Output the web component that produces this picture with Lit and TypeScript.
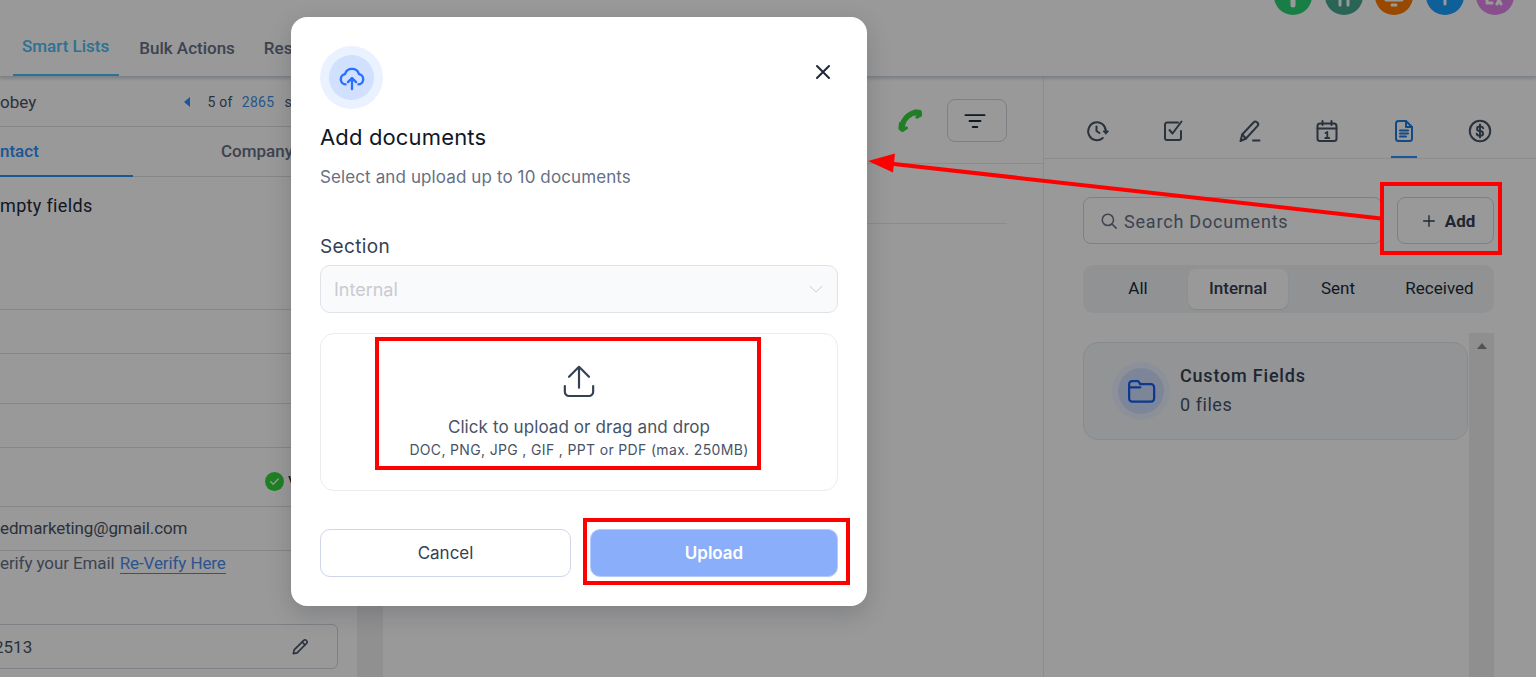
import { LitElement, html, css, svg } from "lit";
import { customElement } from "lit/decorators.js";

const I = (w: number, body: unknown, cls = "", sw = 2) => html`<svg class=${cls} width=${w} height=${w} viewBox="0 0 24 24" fill="none" stroke="currentColor" stroke-width=${sw} stroke-linecap="round" stroke-linejoin="round">${body}</svg>`;

@customElement("app-root")
export class AppRoot extends LitElement {
  static styles = css`
    :host { display: block; width: 1536px; height: 677px; position: relative; overflow: hidden; font-family: Roboto, "Liberation Sans", sans-serif; background: #fff; color: #344054; }
    * { box-sizing: border-box; }
    .page { display: flex; flex-direction: column; height: 677px; }
    .head { height: 77px; flex: none; display: flex; flex-direction: column; border-bottom: 1px solid #d0d5dd; box-shadow: 0 2px 3px rgba(16,24,40,.16); position: relative; z-index: 1; }
    .avatars { height: 27px; margin-top: -23px; display: flex; justify-content: flex-end; gap: 12.4px; padding-right: 22px; flex: none; }
    .av { width: 38px; height: 38px; border-radius: 50%; flex: none; position: relative; color: #fff; display: flex; align-items: flex-end; justify-content: center; }
    .av svg { margin-bottom: -9px; }
    .tabs { display: flex; padding-left: 13px; height: 73px; align-items: stretch; font-size: 17px; font-weight: 500; }
    .tab { display: flex; align-items: center; padding: 15px 9px 0; color: #667085; margin-right: 11px; }
    .tab.on { color: #4dbcf5; border-bottom: 2px solid #4dbcf5; padding: 13px 10px 0 9px; }
    .tab.res { margin-left: 0; }
    .main { flex: 1; display: flex; min-height: 0; }
    .left { width: 357px; flex: none; display: flex; flex-direction: column; font-size: 17px; }
    .row { border-bottom: 1.5px solid #dcdfe5; display: flex; align-items: center; flex: none; }
    .r1 { height: 50px; justify-content: space-between; color: #475467; }
    .pager { display: flex; align-items: center; font-size: 14px; margin-right: 65px; letter-spacing: .3px; }
    .tri { width: 0; height: 0; border: 5px solid transparent; border-right: 6px solid #2e90fa; border-left: 0; margin-right: 17px; }
    .pager b { font-weight: 400; color: #3f8fe6; margin-left: 9px; margin-right: 10px; }
    .r2 { height: 50px; font-size: 17px; font-weight: 500; color: #667085; }
    .ct { width: 133px; height: 100%; display: flex; align-items: center; border-bottom: 2px solid #2e90fa; color: #2e90fa; margin-bottom: -1px; }
    .co { margin-left: 88px; padding-bottom: 2px; }
    .r3 { height: 133px; align-items: flex-start; padding-top: 18px; font-size: 18px; letter-spacing: .35px; color: #1d2939; }
    .r4 { height: 44px; } .r5 { height: 50px; }
    .r7 { height: 59px; justify-content: flex-end; padding-top: 9px; }
    .r7 i { font-style: normal; color: #1d2939; margin-left: 4px; margin-right: 58px; width: 11px; }
    .ok { width: 19px; height: 19px; border-radius: 50%; background: #32d83c; color: #fff; display: flex; align-items: center; justify-content: center; flex: none; }
    .r8 { height: 44px; font-size: 17px; letter-spacing: -.12px; color: #475467; padding-bottom: 2px; }
    .verify { font-size: 17px; letter-spacing: -.1px; color: #667085; margin: 2px 0 0; line-height: 20px; }
    .verify a { color: #4a8cf0; border-bottom: 1px solid #4a8cf0; margin-left: 1px; }
    .inp { width: 348px; height: 45px; margin: 51px 0 0 -10px; border: 1.5px solid #d0d5dd; border-radius: 6px; display: flex; align-items: center; justify-content: space-between; padding: 0 27px 0 3px; font-size: 17px; color: #475467; flex: none; }
    .strip { width: 26px; flex: none; background: #f1f1f1; }
    .center { width: 661px; flex: none; border-right: 1px solid #e9eaee; display: flex; flex-direction: column; }
    .ctop { height: 87px; flex: none; border-bottom: 1.5px solid #e9eaee; display: flex; align-items: flex-start; justify-content: flex-end; padding: 22px 36px 0 0; }
    .phone { color: #38d040; margin: 9px 25px 0 0; }
    .fbtn { width: 60px; height: 43px; border: 1.5px solid #d0d5dd; border-radius: 8px; display: flex; align-items: center; justify-content: center; color: #1d2939; padding-right: 4px; }
    .cline { height: 60px; margin-right: 36px; border-bottom: 1.5px solid #e9eaee; flex: none; }
    .right { flex: 1; display: flex; flex-direction: column; min-width: 0; }
    .rtabs { height: 82px; flex: none; border-bottom: 1.5px solid #e9eaee; display: flex; padding: 41px 0 0 39.5px; color: #475467; }
    .rt { width: 26px; margin-right: 50.8px; height: 40px; display: flex; justify-content: center; flex: none; padding-top: 1px; }
    .rt.on { color: #1f7ae0; border-bottom: 2px solid #2e90fa; }
    .tools { display: flex; padding: 38px 42px 0 39px; gap: 15px; flex: none; }
    .search { width: 299px; height: 47px; border: 1.5px solid #d0d5dd; border-radius: 8px; display: flex; align-items: center; gap: 6px; padding: 1px 0 0 16px; font-size: 18px; letter-spacing: .8px; color: #667085; }
    .add { width: 97px; height: 47px; border: 1.5px solid #d0d5dd; border-radius: 8px; display: flex; align-items: center; justify-content: center; gap: 8px; font-size: 17px; font-weight: 700; color: #344054; padding-left: 5px; }
    .seg { margin: 21px 42px 0 39px; height: 48px; width: 411px; border-radius: 10px; background: #f2f4f7; display: grid; grid-template-columns: 105px 100px 100px 106px; align-items: center; justify-items: center; font-size: 17px; color: #1d2939; flex: none; }
    .seg .s { width: 100%; height: 40px; display: flex; align-items: center; justify-content: center; padding-bottom: 2px; }
    .seg .s:first-child { padding-left: 5px; }
    .seg .s:last-child { padding-right: 3px; }
    .seg .a { background: #fff; border-radius: 8px; font-weight: 500; color: #344054; box-shadow: 0 1px 2px rgba(16,24,40,.1); }
    .lower { display: flex; margin: 20px 42px 0 39px; flex: 1; min-height: 0; }
    .cards { flex: 1; padding-top: 9px; }
    .card { width: 385px; height: 98px; border: 1.5px solid #e4e7ec; border-radius: 15px; background: #f5f7fb; display: flex; align-items: center; padding: 0 0 0 34px; gap: 16px; }
    .fo { width: 46px; height: 46px; border-radius: 50%; background: #d1e0ff; box-shadow: 0 0 0 6px #eaf1ff; display: flex; align-items: center; justify-content: center; color: #155eef; flex: none; }
    .cn { font-size: 18px; font-weight: 500; color: #344054; letter-spacing: .8px; line-height: 29px; margin-top: -2px; }
    .cf { font-size: 18px; color: #475467; letter-spacing: .55px; line-height: 29px; }
    .sb { width: 25px; background: #efefef; display: flex; justify-content: center; padding-top: 10px; flex: none; }
    .up { width: 0; height: 0; border: 5.5px solid transparent; border-bottom: 6px solid #8a8a8a; border-top: 0; }

    .veil { position: absolute; inset: 0; background: rgba(0,0,0,.4); padding: 17px 0 0 291px; z-index: 2; }
    .modal { position: relative; width: 576px; height: 589px; background: #fff; border-radius: 16px; padding: 29px 29px 0; font-family: Inter, Roboto, sans-serif; box-shadow: 0 8px 24px rgba(16,24,40,.18); display: flex; flex-direction: column; }
    .close { position: absolute; top: 43px; right: 32px; color: #1d2939; display: flex; }
    .mi { width: 63px; height: 63px; border-radius: 50%; background: #eaf1ff; display: flex; align-items: center; justify-content: center; flex: none; }
    .mi div { width: 45px; height: 45px; border-radius: 50%; background: #d1e0ff; display: flex; align-items: center; justify-content: center; color: #2970ff; }
    h2 { margin: 13px 0 0; font-size: 22px; font-weight: 400; line-height: 30px; letter-spacing: .15px; color: #101828; }
    .sub { margin: 13px 0 0; font-size: 17px; line-height: 24px; letter-spacing: .11px; color: #667085; }
    .lab { margin-top: 44px; font-size: 19px; letter-spacing: .35px; line-height: 28px; color: #344054; }
    .sel { margin-top: 4px; height: 48px; border: 1px solid #e0e2e8; border-radius: 10px; background: #f9fafb; display: flex; align-items: center; justify-content: space-between; padding: 0 12px 0 13px; font-size: 18px; color: #c9cbd0; flex: none; }
    .drop { position: relative; margin-top: 20px; height: 158px; border: 1px solid #eaecf0; border-radius: 14px; display: flex; flex-direction: column; align-items: center; padding-top: 27px; flex: none; }
    .drop svg { color: #344054; }
    .d1 { margin-top: 14px; font-size: 17px; line-height: 24px; letter-spacing: .09px; color: #475467; }
    .d2 { font-size: 14px; line-height: 22px; letter-spacing: .34px; color: #475467; }
    .btns { margin-top: 38px; display: flex; justify-content: space-between; }
    .btn { height: 48px; border-radius: 10px; display: flex; align-items: center; justify-content: center; font-size: 17px; flex: none; }
    .cancel { width: 251px; border: 1px solid #d0d5e8; color: #344054; font-weight: 400; }
    .upload { width: 248px; background: #8aaefa; border: 1px solid #b2ccff; color: #fff; font-weight: 600; position: relative; }

    .mark { position: absolute; border: 4px solid #ff0000; pointer-events: none; }
    .m1 { left: 54px; top: 3px; width: 386px; height: 133px; }
    .m2 { left: -8px; top: -12px; width: 267px; height: 67px; }
    .m3 { left: 1380px; top: 182px; width: 122px; height: 73px; z-index: 3; }
    .arrow { position: absolute; left: 0; top: 0; z-index: 3; pointer-events: none; }
  `;

  render() {
    const avs: [string, unknown][] = [
      ["#2bd075", svg`<path d="M12 0v5" stroke-width="5"/>`],
      ["#46a78e", svg`<path d="M8 0v5M16 0v5" stroke-width="3"/>`],
      ["#ff7800", svg`<path d="M4 0h16M10 5h4" stroke-width="3"/>`],
      ["#199eff", svg`<path d="M12 0v4" stroke-width="3"/>`],
      ["#e185e9", svg`<path d="M4 0v3h5M14 4l2-4 2 4" stroke-width="3"/>`],
    ];
    const tabsIcons = [
      svg`<path d="M20.800 12a8.800 9 0 1 0-3 7"/><path d="M11.500 7.500v4.500l3 2"/><path d="M18.500 12h5l-2.500 3z" fill="currentColor" stroke-width="1"/>`,
      svg`<path d="M20 12v7a2 2 0 0 1-2 2H6a2 2 0 0 1-2-2V5.500a2 2 0 0 1 2-2h11"/><path d="M8.500 11l3 3.500L20.500 2.500"/>`,
      svg`<path d="M2.500 22l1.700-6.500L15.500 3.500a2.500 2.500 0 0 1 3.500-.3 2.700 2.700 0 0 1 .6 3.700L8 19.500z"/><path d="M4.200 15.500l3.800 4"/><path d="M15 21.500h6.500"/>`,
      svg`<rect x="2.500" y="4.500" width="19" height="17.500" rx="2.500"/><path d="M2.500 9.500h19M7.500 2v4M16.500 2v4"/><path d="M10.500 14l1.800-1v6M10.200 19h4" stroke-width="1.800"/>`,
      svg`<path d="M4 4.500A2.500 2.500 0 0 1 6.500 2H14l6 6v11.500a2.500 2.500 0 0 1-2.500 2.500h-11A2.500 2.500 0 0 1 4 19.500z"/><path d="M14 2v6h6M8 11.500h8M8 14.500h8M8 17.500h6"/>`,
      svg`<circle cx="12" cy="12" r="10.200"/><path d="M15.200 9.300A2.700 2.300 0 0 0 12.700 7.500h-1.300a2.300 2.300 0 0 0 0 4.600h1.300a2.300 2.300 0 0 1 0 4.600h-1.300a2.800 2.300 0 0 1-2.700-1.900M12 5.500v13"/>`,
    ];
    return html`
      <div class="page">
        <div class="head">
          <div class="avatars">${avs.map(([c, b]) => html`<div class="av" style="background:${c}">${I(24, b)}</div>`)}</div>
          <div class="tabs">
            <div class="tab on">Smart Lists</div>
            <div class="tab">Bulk Actions</div>
            <div class="tab res">Res</div>
          </div>
        </div>
        <div class="main">
          <div class="left">
            <div class="row r1"><span>obey</span><span class="pager"><span class="tri"></span>5 of <b>2865</b> s</span></div>
            <div class="row r2"><span class="ct">ntact</span><span class="co">Company</span></div>
            <div class="row r3"><span>mpty fields</span></div>
            <div class="row r4"></div>
            <div class="row r5"></div>
            <div class="row r4"></div>
            <div class="row r7"><span class="ok">${I(13, svg`<path d="M5 12.500l4.500 4.500L19 7.500"/>`, "", 2.5)}</span><i>V</i></div>
            <div class="row r8">edmarketing@gmail.com</div>
            <div class="verify">erify your Email <a>Re-Verify Here</a></div>
            <div class="inp"><span>2513</span>${I(20, svg`<path d="M4 20l1-4.500L16.500 4a2 2 0 0 1 3 0l.5.5a2 2 0 0 1 0 3L8.500 19z"/><path d="M14.500 6l3.500 3.500"/>`, "", 2)}</div>
          </div>
          <div class="strip"></div>
          <div class="center">
            <div class="ctop">
              <svg class="phone" width="24" height="24" viewBox="0 0 24 24" fill="none" stroke="currentColor" stroke-linecap="round"><path d="M20.500 4.500C12.500 3.500 4.500 11 4 20" stroke-width="5.500"/><path d="M17 3l5 .5.800 3.500-3.800 2" stroke-width="3.200" stroke-linejoin="round"/><path d="M2.500 15.500L2 20.500l2.500 2 3.800-2.500" stroke-width="3.200" stroke-linejoin="round"/></svg>
              <div class="fbtn">${I(22, svg`<path d="M1.500 5.500h21M6 12h12M9.500 18.500h5"/>`)}</div>
            </div>
            <div class="cline"></div>
          </div>
          <div class="right">
            <div class="rtabs">${tabsIcons.map((b, i) => html`<div class="rt ${i === 4 ? "on" : ""}">${I(24, b, "", 2)}</div>`)}</div>
            <div class="tools">
              <div class="search">${I(18, svg`<circle cx="10.500" cy="10.500" r="7.500"/><path d="M16 16l5.500 5.500"/>`)}<span>Search Documents</span></div>
              <div class="add">${I(16, svg`<path d="M12 4v16M4 12h16"/>`, "", 2)}<span>Add</span></div>
            </div>
            <div class="seg"><div class="s">All</div><div class="s a">Internal</div><div class="s">Sent</div><div class="s">Received</div></div>
            <div class="lower">
              <div class="cards">
                <div class="card">
                  <div class="fo">${I(30, svg`<path d="M2.500 6.500A2.500 2.500 0 0 1 5 4h3.500a2.500 2.500 0 0 1 2.200 1.300l.6 1.200H20A2.500 2.500 0 0 1 22.500 9v9a2.500 2.500 0 0 1-2.500 2.500H5A2.500 2.500 0 0 1 2.500 18zM2.500 9h9"/>`, "", 1.8)}</div>
                  <div><div class="cn">Custom Fields</div><div class="cf">0 files</div></div>
                </div>
              </div>
              <div class="sb"><div class="up"></div></div>
            </div>
          </div>
        </div>
      </div>

      <div class="veil">
        <div class="modal">
          <div class="close">${I(24, svg`<path d="M6 6l12 12M18 6L6 18"/>`)}</div>
          <div class="mi"><div>${I(28, svg`<path d="M6.500 17.500A4.500 4.500 0 0 1 6 8.600a6.300 6.300 0 0 1 12 0 4.500 4.500 0 0 1-.5 8.900"/><path d="M12 21.500V12.500M8.500 15.500l3.500-3.500 3.500 3.500"/>`, "", 2)}</div></div>
          <h2>Add documents</h2>
          <p class="sub">Select and upload up to 10 documents</p>
          <div class="lab">Section</div>
          <div class="sel"><span>Internal</span>${I(18, svg`<path d="M4 8.500l8 7.500 8-7.500"/>`, "", 1.2)}</div>
          <div class="drop">
            <div class="mark m1"></div>
            ${I(40, svg`<path d="M12 16V3.500M6 9.500l6-6 6 6"/><path d="M3.500 15v3.500A2.500 2.500 0 0 0 6 21h12a2.500 2.500 0 0 0 2.500-2.500V15"/>`, "", 1.3)}
            <div class="d1">Click to upload or drag and drop</div>
            <div class="d2">DOC, PNG, JPG , GIF , PPT or PDF (max. 250MB)</div>
          </div>
          <div class="btns">
            <div class="btn cancel">Cancel</div>
            <div class="btn upload">Upload<div class="mark m2"></div></div>
          </div>
        </div>
      </div>
      <div class="mark m3"></div>
      <svg class="arrow" width="1536" height="677"><path d="M1381 218.500L885 163" stroke="#ff0000" stroke-width="4"/><path d="M868 161l27-7.500-2 19z" fill="#ff0000"/></svg>
    `;
  }
}
